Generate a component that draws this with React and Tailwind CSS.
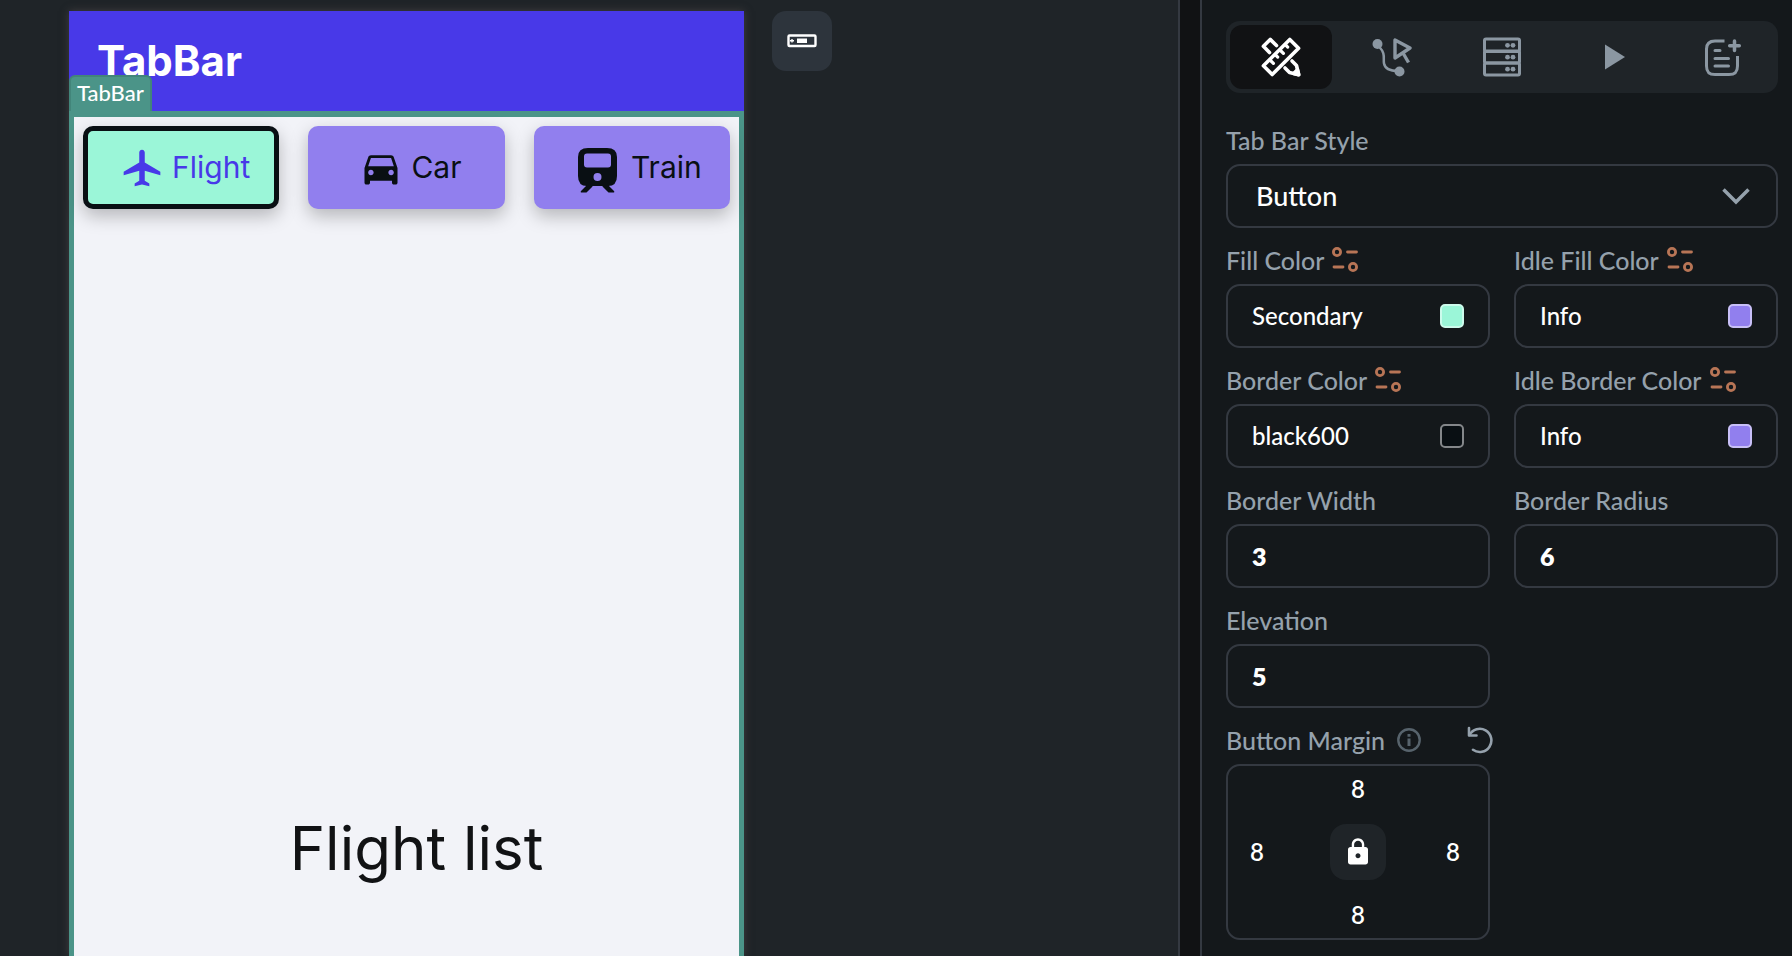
import { MdLocalAirport, MdDirectionsCar, MdLock } from "react-icons/md";

const field = "h-16 w-full rounded-[14px] border-2 border-[#343941] bg-[#14181b] text-white";

function DesignIcon() {
  return (
    <svg viewBox="0 0 40 40" className="size-10" fill="none" stroke="currentColor" strokeWidth="3.6" strokeLinejoin="round" strokeLinecap="round" aria-hidden="true">
      <path d="M2.4 28.8 28.8 2.4 37.6 11.2 11.2 37.6Z" />
      <path d="m9 23 3.4 3.4M14.3 17.7l2.400 2.400M19 13l3.400 3.400M24.300 7.700l2.400 2.400" strokeWidth="3.2" />
      <path d="M8.500 15.500 2.400 9.200 9.200 2.400 15.500 8.500" />
      <path d="m31 24 4.500 4.500 2.200 9.200-9.200-2.200L24 31" />
      <path d="m37.700 37.700-5-1.300 3.700-3.700Z" fill="currentColor" />
    </svg>
  );
}

function FlowIcon() {
  return (
    <svg viewBox="0 0 40 40" className="size-10" fill="none" stroke="currentColor" strokeWidth="2.5" aria-hidden="true">
      <circle cx="5.500" cy="7" r="5" fill="currentColor" stroke="none" />
      <circle cx="27.500" cy="34.500" r="5" fill="currentColor" stroke="none" />
      <path d="M7 9.500C14 17 11 21 12 26.500c1 5 6 7.500 14 7.500" />
      <path d="M23 3v18L38 11Z" strokeWidth="3.400" strokeLinejoin="round" />
      <path d="m31 16 5.500 9.500" strokeWidth="3.400" />
    </svg>
  );
}

function StorageIcon() {
  return (
    <svg viewBox="0 0 40 40" className="size-10" fill="none" stroke="currentColor" strokeWidth="3" aria-hidden="true">
      <rect x="2.500" y="2" width="35" height="12.500" rx="1.500" />
      <rect x="2.500" y="14" width="35" height="12" rx="1.500" />
      <rect x="2.500" y="26" width="35" height="12" rx="1.500" />
      <g fill="currentColor" stroke="none">
        <circle cx="25.500" cy="8.300" r="2.400" />
        <circle cx="31" cy="8.300" r="2.400" />
        <circle cx="25.500" cy="20.200" r="2.400" />
        <circle cx="31" cy="20.200" r="2.400" />
        <circle cx="25.500" cy="32.200" r="2.400" />
        <circle cx="31" cy="32.200" r="2.400" />
      </g>
    </svg>
  );
}

function PlayIcon() {
  return (
    <svg viewBox="0 0 40 40" className="size-10" fill="currentColor" aria-hidden="true">
      <path d="M13 7.500 33 20 13 32.500Z" />
    </svg>
  );
}

function NoteIcon() {
  return (
    <svg viewBox="0 0 40 40" className="size-10" fill="none" stroke="currentColor" strokeWidth="3" strokeLinecap="round" aria-hidden="true">
      <path d="M21.500 4H12C6 4 3.500 6.500 3.500 12v17c0 6 2.500 8.500 8.500 8.500h14c6 0 8.500-2.500 8.500-8.500V19" strokeLinecap="butt" />
      <path d="M31.500 4v9.500M26.700 8.700h9.600" strokeWidth="3.500" />
      <path d="M12 13.500h5M12 21.500h13.500M12 29h13.500" />
    </svg>
  );
}

function VariableIcon() {
  return (
    <svg viewBox="0 0 28 28" className="size-7" fill="none" stroke="#b87556" strokeWidth="2.800" strokeLinecap="round" aria-hidden="true">
      <circle cx="5" cy="6" r="3.600" />
      <circle cx="21" cy="21" r="3.600" />
      <path d="M15.500 6h9M2 21h9" />
    </svg>
  );
}

function TrainIcon() {
  return (
    <svg viewBox="0 0 39 45" className="mt-1.5 mr-1.5 h-[45px] w-[39px]" fill="currentColor" aria-hidden="true">
      <path
        fillRule="evenodd"
        d="M10 0h19q10 0 10 9v19q0 10-9 10H9Q0 38 0 28V9Q0 0 10 0ZM9 5.500Q6 5.500 6 8.500V16.500q0 3 3 3h21q3 0 3-3V8.500q0-3-3-3ZM19.500 25a4 4 0 1 0 0 8 4 4 0 1 0 0-8Z"
      />
      <path d="M8 36h6.500v2.500L9 44q-.5.500-1 .500H4q-2 0-1-1.500l5-5ZM31 36h-6.500v2.500L30 44q.5.500 1 .500h4q2 0 1-1.500l-5-5Z" />
    </svg>
  );
}

const tools = [
  { name: "Design", Icon: DesignIcon, active: true },
  { name: "Actions", Icon: FlowIcon },
  { name: "Backend", Icon: StorageIcon },
  { name: "Animations", Icon: PlayIcon },
  { name: "Notes", Icon: NoteIcon },
];

function Label({ children, htmlFor }) {
  return (
    <label htmlFor={htmlFor} className="block text-[25px] leading-8 font-medium whitespace-nowrap text-[#95a1ac]">
      {children}
    </label>
  );
}

function ColorField({ id, label, value, swatch }) {
  return (
    <div className="flex flex-col gap-2">
      <div className="flex items-center gap-2">
        <Label htmlFor={id}>{label}</Label>
        <VariableIcon />
      </div>
      <button id={id} type="button" className={`${field} flex items-center justify-between px-6 text-2xl font-medium`}>
        {value}
        <span className={`size-6 rounded-[5px] border-2 ${swatch}`} />
      </button>
    </div>
  );
}

function NumberField({ id, label, value }) {
  return (
    <div className="flex flex-col gap-2">
      <Label htmlFor={id}>{label}</Label>
      <input id={id} type="text" inputMode="numeric" defaultValue={value} className={`${field} px-6 text-[25px] font-extrabold`} />
    </div>
  );
}

function MarginInput({ side, className }) {
  return (
    <input
      type="text"
      inputMode="numeric"
      aria-label={`${side} margin`}
      defaultValue="8"
      className={`w-16 bg-transparent text-center text-2xl font-semibold text-white ${className}`}
    />
  );
}

function Canvas() {
  const tab = "flex h-[83px] items-center justify-center gap-2 rounded-[10px] text-[30px] shadow-[0_7px_18px_rgba(0,0,0,0.25)]";
  return (
    <main className="flex min-w-0 flex-1 items-stretch gap-7 border-r-2 border-[#343941] bg-[#1f2428] pt-[11px] pl-[69px]">
      <section className="flex w-[675px] shrink-0 flex-col font-['Inter',sans-serif] shadow-[0_0_8px_rgba(90,80,80,0.6)]">
        <header className="relative h-[100px] bg-[#4839e8] px-7 pt-6">
          <h1 className="text-[42px] leading-[52px] font-bold text-white">TabBar</h1>
          <span className="absolute bottom-0 left-0 flex h-9 items-center rounded-t-md border-2 border-b-0 border-[#42857a] bg-[#4b9488] px-1.5 pb-1 font-['Lato',sans-serif] text-[22px] font-medium text-white">
            TabBar
          </span>
        </header>
        <div className="flex flex-1 flex-col border-x-[5px] border-t-[6px] border-[#4b9488] bg-[#f2f3f8]">
          <div role="tablist" className="grid grid-cols-3 gap-[29px] px-[9px] pt-[9px]">
            <button type="button" role="tab" aria-selected="true" className={`${tab} border-[5px] border-[#090f13] bg-[#9bf6d8] pl-2 text-[#4839e8]`}>
              <MdLocalAirport className="size-11" />
              Flight
            </button>
            <button type="button" role="tab" aria-selected="false" className={`${tab} bg-[#917fee] pl-2 text-[#090f13]`}>
              <MdDirectionsCar className="size-11" />
              Car
            </button>
            <button type="button" role="tab" aria-selected="false" className={`${tab} bg-[#917fee] pl-4 text-[#090f13]`}>
              <TrainIcon />
              Train
            </button>
          </div>
          <p className="mt-auto pb-[76px] pl-5 text-center text-[60px] leading-[64px] text-[#111214]">Flight list</p>
        </div>
      </section>
      <button type="button" aria-label="App bar" className="flex size-[60px] items-center justify-center rounded-[14px] bg-[#2d343c] text-white">
        <svg viewBox="0 0 30 14" className="h-3.5 w-[30px]" aria-hidden="true">
          <rect x="1.500" y="1.500" width="27" height="10.500" rx="1" fill="none" stroke="currentColor" strokeWidth="2.400" />
          <path d="M10 4.500h10v4.500H10Z" fill="currentColor" />
          <path d="M5 5v3.600M3 6.800h4" stroke="currentColor" strokeWidth="1.400" />
        </svg>
      </button>
    </main>
  );
}

function Properties() {
  return (
    <aside className="flex w-[592px] shrink-0 flex-col border-l-2 border-[#343941] bg-[#14181b] pt-[21px] pr-3.5 pb-4 pl-6">
      <nav className="flex gap-2 rounded-[14px] bg-[#1f2428] p-1">
        {tools.map(({ name, Icon, active }) => (
          <button
            key={name}
            type="button"
            aria-label={name}
            className={`flex h-16 flex-1 items-center justify-center rounded-xl ${active ? "bg-[#111214] text-white" : "text-[#8b97a2]"}`}
          >
            <Icon />
          </button>
        ))}
      </nav>
      <form className="mt-[31px] flex flex-col gap-4">
        <div className="flex flex-col gap-2">
          <Label htmlFor="style">Tab Bar Style</Label>
          <div className="relative">
            <select id="style" className={`${field} appearance-none px-7 text-[27px] font-medium`}>
              <option>Button</option>
            </select>
            <svg viewBox="0 0 28 18" className="pointer-events-none absolute top-6 right-7 h-[18px] w-7" fill="none" stroke="#95a1ac" strokeWidth="3.500" aria-hidden="true">
              <path d="M1.500 1.500 14 14 26.500 1.500" />
            </svg>
          </div>
        </div>
        <div className="grid grid-cols-2 gap-x-6 gap-y-4">
          <ColorField id="fill" label="Fill Color" value="Secondary" swatch="border-[#cdfbec] bg-[#9bf6d8]" />
          <ColorField id="idle-fill" label="Idle Fill Color" value="Info" swatch="border-[#c8bff7] bg-[#917fee]" />
          <ColorField id="border" label="Border Color" value="black600" swatch="border-[#84878a] bg-[#090f13]" />
          <ColorField id="idle-border" label="Idle Border Color" value="Info" swatch="border-[#c8bff7] bg-[#917fee]" />
          <NumberField id="border-width" label="Border Width" value="3" />
          <NumberField id="border-radius" label="Border Radius" value="6" />
          <div className="col-span-2 grid grid-cols-2 gap-x-6">
            <NumberField id="elevation" label="Elevation" value="5" />
          </div>
          <fieldset className="flex flex-col gap-2">
            <div className="flex h-8 items-center gap-3">
              <span className="text-[25px] leading-8 font-medium whitespace-nowrap text-[#95a1ac]">Button Margin</span>
              <svg viewBox="0 0 24 24" className="size-6" fill="none" stroke="#57636c" strokeWidth="2.400" aria-hidden="true">
                <circle cx="12" cy="12" r="10.700" />
                <path d="M12 10.500V18M12 6v2.800" strokeWidth="3" />
              </svg>
              <button type="button" aria-label="Reset margin" className="-mr-1 ml-auto text-[#95a1ac]">
                <svg viewBox="0 0 28 28" className="size-7" fill="none" stroke="currentColor" strokeWidth="2.600" strokeLinecap="round" strokeLinejoin="round" aria-hidden="true">
                  <path d="M3 2v7.500h7.500" />
                  <path d="M3.500 9A11.600 11.600 0 1 1 7 23.800" />
                </svg>
              </button>
            </div>
            <div className="grid grid-cols-[64px_1fr_64px] grid-rows-[46px_80px_46px] place-items-center rounded-[14px] border-2 border-[#343941]">
              <MarginInput side="Top" className="col-start-2" />
              <MarginInput side="Left" className="col-start-1 row-start-2 pr-1.5" />
              <button type="button" aria-label="Lock margins" className="col-start-2 row-start-2 flex size-14 items-center justify-center rounded-2xl bg-[#1f2428] text-white">
                <MdLock className="size-[30px]" />
              </button>
              <MarginInput side="Right" className="col-start-3 row-start-2 pr-1.5" />
              <MarginInput side="Bottom" className="col-start-2 row-start-3" />
            </div>
          </fieldset>
        </div>
      </form>
    </aside>
  );
}

export default function App() {
  return (
    <div className="flex min-h-screen bg-[#111214] font-['Lato',sans-serif]">
      <Canvas />
      <div className="w-5 shrink-0" />
      <Properties />
    </div>
  );
}
